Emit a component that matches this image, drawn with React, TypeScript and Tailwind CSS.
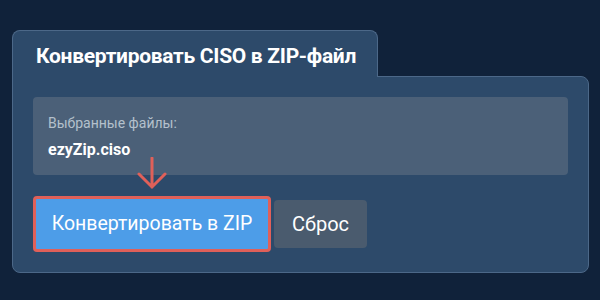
import React from "react";

export default function App() {
  return (
    <div className="w-[600px] h-[300px] bg-[#10223a] pt-[30px] pl-[12px]" style={{ fontFamily: "Roboto, 'Noto Sans', sans-serif" }}>
      <div className="w-[577px]">
        <div className="relative z-10 -mb-px w-[366px] h-[47px] bg-[#2d4a6a] border border-b-0 border-[#4c6888] rounded-t-[8px] flex items-center pl-[23px]">
          <span className="text-[21px] font-bold text-white tracking-[-0.3px] leading-none pt-[5px]">Конвертировать CISO в ZIP-файл</span>
        </div>
        <div className="relative bg-[#2d4a6a] border border-[#4c6888] rounded-b-[8px] rounded-tr-[8px] px-[20px] pt-[20px] pb-[20px]">
          <div className="h-[78px] bg-[#4b6078] rounded-[4px] pl-[15px] pt-[18px] flex flex-col">
            <span className="text-[14px] leading-[16px] text-[#b4c0cc]">Выбранные файлы:</span>
            <span className="mt-[10px] text-[16px] leading-[18px] font-bold text-white">ezyZip.ciso</span>
          </div>
          <div className="mt-[21px] flex items-center gap-[3px]">
            <div className="relative">
              <svg className="absolute left-[104px] -top-[39px]" width="30" height="33" viewBox="0 0 30 33" fill="none">
                <path d="M15 1 V30 M2 17 L15 30 L28 17" stroke="#e06059" strokeWidth="3" strokeLinecap="round" strokeLinejoin="miter" />
              </svg>
              <button className="h-[56px] w-[238px] bg-[#4d9de8] border-[3px] border-[#e06059] rounded-[4px] text-white text-[19.5px] flex items-center justify-center">
                Конвертировать в ZIP
              </button>
            </div>
            <button className="h-[48px] w-[93px] bg-[#4a5b6e] rounded-[4px] text-white text-[20px] flex items-center justify-center">
              Сброс
            </button>
          </div>
        </div>
      </div>
    </div>
  );
}
